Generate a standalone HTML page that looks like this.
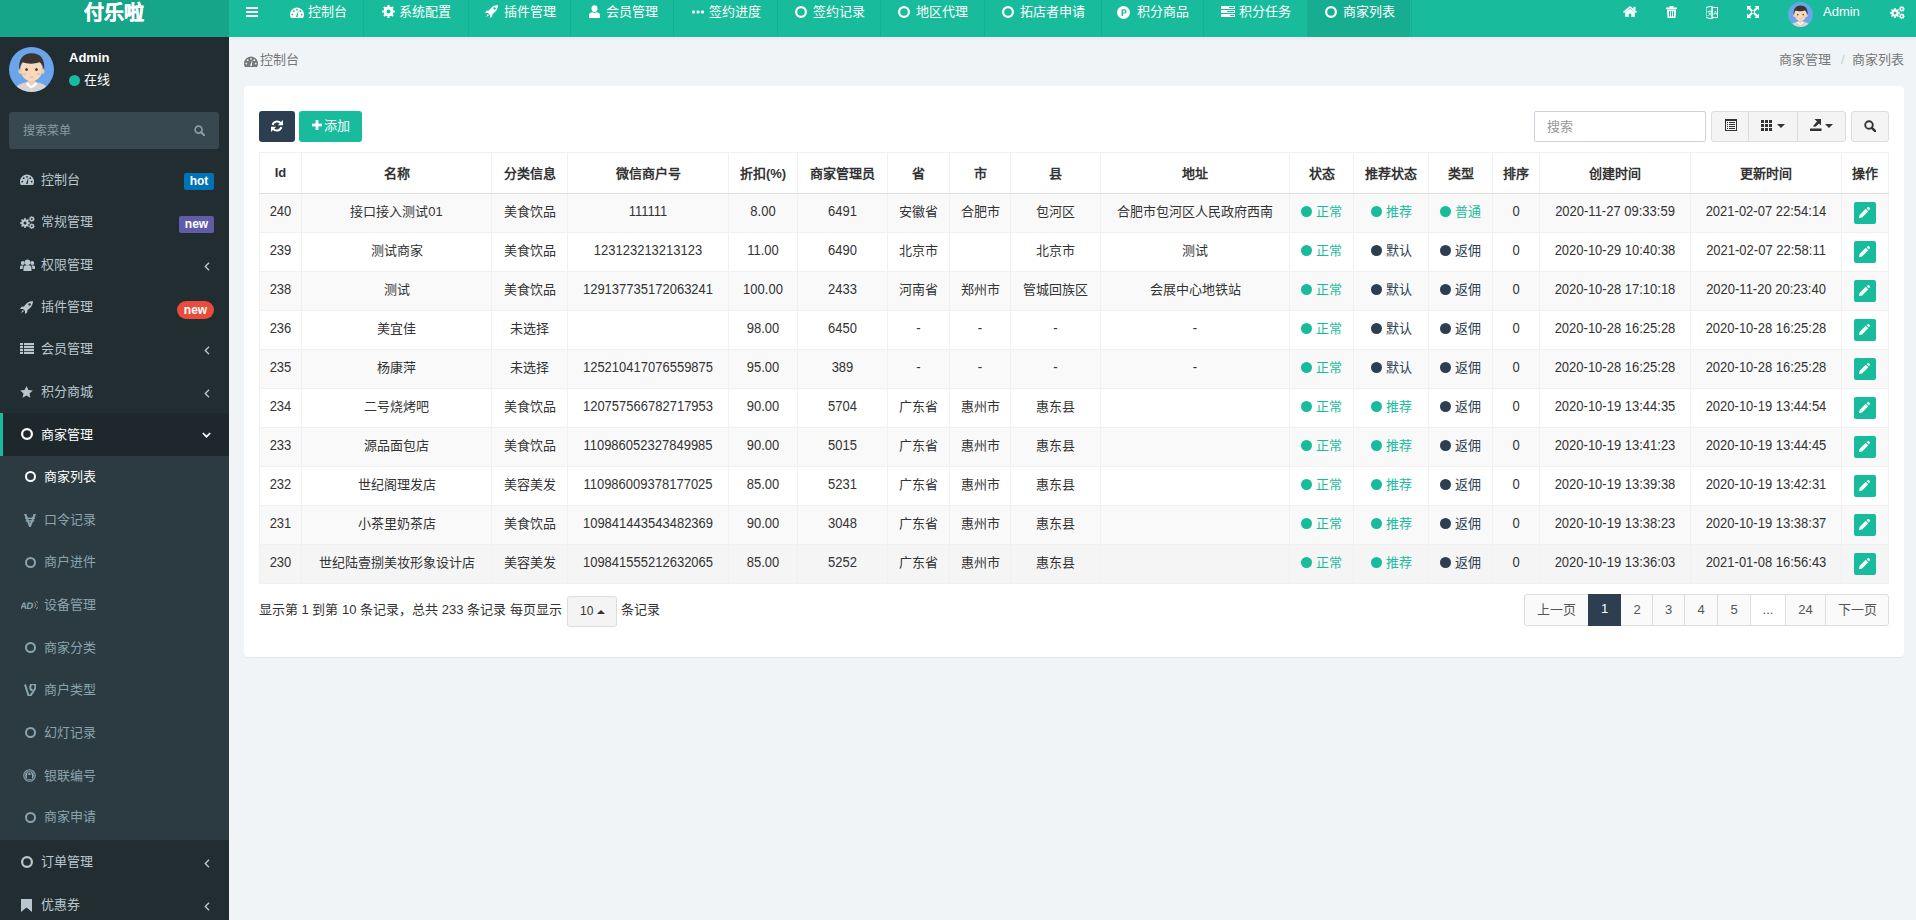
<!DOCTYPE html><html lang="zh-CN"><head><meta charset="utf-8"><style>*{box-sizing:border-box;margin:0;padding:0}
html,body{width:1916px;height:920px;overflow:hidden}
body{font-family:"Liberation Sans",sans-serif;font-size:13px;color:#333;background:#f1f4f6;position:relative}
.abs{position:absolute}
#logo{left:0;top:0;width:229px;height:37px;background:#17a58a;color:#fff;font-weight:900;font-size:20px}
#logo span{position:absolute;left:84px;top:1px;line-height:24px;-webkit-text-stroke:0.35px #fff}
#nav{left:229px;top:0;width:1687px;height:37px;background:#18bc9c}
.sep{top:0;width:1px;height:37px;background:#17b092}
.ntx{top:4px;color:#fff;line-height:16px;white-space:nowrap}
#side{left:0;top:37px;width:229px;height:883px;background:#222d32}
.mtx{color:#b8c7ce;line-height:16px;white-space:nowrap}
.badge{color:#fff;font-weight:bold;font-size:12px;text-align:center;line-height:17px}
#panel{left:244px;top:86px;width:1660px;height:571px;background:#fff;border-radius:4px;box-shadow:0 1px 1px rgba(0,0,0,.06)}
.btn{border-radius:3px}
.gbtn{background:#f4f4f4;border:1px solid #ddd}
table{border-collapse:collapse;table-layout:fixed}
td,th{border:1px solid #f1f1f1;text-align:center;white-space:nowrap;overflow:hidden;padding:0;font-size:13px}
th{height:41px;font-weight:bold;border-bottom:1px solid #dedede;color:#333;padding-bottom:2px}
td{height:39px;color:#333;padding-bottom:6px}
tr.s td{background:#f9f9f9}
tr.h td{background:#f5f5f5}
.g{color:#18bc9c}
.d{color:#2c3e50}
.dot{display:inline-block;width:11px;height:11px;border-radius:50%;vertical-align:-1px;margin-right:4px}
.g .dot{background:#18bc9c}.d .dot{background:#2c3e50}
.eb{display:inline-block;width:22px;height:22px;background:#18bc9c;border-radius:2px;vertical-align:middle;position:relative}
.pg{text-align:center;line-height:30px;font-size:13px}
.n{display:inline-block;transform:translateY(1px) scaleY(1.12);transform-origin:50% 60%}
</style></head><body>
<div id="logo" class="abs"><span>付乐啦</span></div>
<div id="nav" class="abs"></div>
<div class="abs" style="left:246px;top:7px"><svg width="12" height="10" viewBox="0 0 12 10" style="display:block" ><rect x="0" y="0" width="12" height="2" fill="#fff"/><rect x="0" y="4" width="12" height="2" fill="#fff"/><rect x="0" y="8" width="12" height="2" fill="#fff"/></svg></div>

<div class="abs" style="left:290px;top:7px"><svg width="14" height="11" viewBox="0 0 14 11" style="display:block" ><path d="M0.94 11 A7 7 0 1 1 13.06 11 Z" fill="#fff"/><circle cx="2.3" cy="7.6" r="0.9" fill="#18bc9c"/><circle cx="3.7" cy="4.2" r="0.9" fill="#18bc9c"/><circle cx="7" cy="2.8" r="0.9" fill="#18bc9c"/><circle cx="10.3" cy="4.2" r="0.9" fill="#18bc9c"/><circle cx="11.7" cy="7.6" r="0.9" fill="#18bc9c"/><path d="M8.4 3.6 L7.9 9.6 A1 1 0 0 1 6.1 9.4 Z" fill="#18bc9c"/></svg></div>
<div class="abs ntx" style="left:308px">控制台</div>
<div class="abs sep" style="left:363px"></div>
<div class="abs" style="left:382px;top:5px"><svg width="13" height="13" viewBox="0 0 13 13" style="display:block" ><path d="M10.99 5.50 L12.92 5.46 L12.92 7.54 L10.99 7.50 L10.38 8.96 L11.77 10.31 L10.31 11.77 L8.96 10.38 L7.50 10.99 L7.54 12.92 L5.46 12.92 L5.50 10.99 L4.04 10.38 L2.69 11.77 L1.23 10.31 L2.62 8.96 L2.01 7.50 L0.08 7.54 L0.08 5.46 L2.01 5.50 L2.62 4.04 L1.23 2.69 L2.69 1.23 L4.04 2.62 L5.50 2.01 L5.46 0.08 L7.54 0.08 L7.50 2.01 L8.96 2.62 L10.31 1.23 L11.77 2.69 L10.38 4.04Z" fill="#fff"/><circle cx="6.5" cy="6.5" r="4.9" fill="#fff"/><circle cx="6.5" cy="6.5" r="2" fill="#18bc9c"/></svg></div>
<div class="abs ntx" style="left:399px">系统配置</div>
<div class="abs sep" style="left:468px"></div>
<div class="abs" style="left:485px;top:5px"><svg width="13" height="13" viewBox="0 0 13 13" style="display:block" ><path d="M13 0 C8.5 0.2 6 2.5 4 5.5 L1.5 5.8 L0 8 L3 8 L5 10 L5 13 L7.2 11.5 L7.5 9 C10.5 7 12.8 4.5 13 0 Z" fill="#fff"/><circle cx="9.6" cy="3.4" r="1.2" fill="#18bc9c"/><path d="M2.8 9 L1 12 L4 10.2 Z" fill="#fff"/></svg></div>
<div class="abs ntx" style="left:504px">插件管理</div>
<div class="abs sep" style="left:570px"></div>
<div class="abs" style="left:589px;top:5px"><svg width="11" height="13" viewBox="0 0 11 13" style="display:block" ><ellipse cx="5.5" cy="3.6" rx="3" ry="3.4" fill="#fff"/><path d="M0 13 L0 10.5 C0 8.3 1.6 7.3 3.2 7.2 C4 7.8 7 7.8 7.8 7.2 C9.4 7.3 11 8.3 11 10.5 L11 13 Z" fill="#fff"/></svg></div>
<div class="abs ntx" style="left:606px">会员管理</div>
<div class="abs sep" style="left:673px"></div>
<div class="abs" style="left:692px;top:10px"><svg width="12" height="4" viewBox="0 0 12 4" style="display:block" ><rect x="0" y="0.5" width="3" height="3" rx="1" fill="#fff"/><rect x="4.5" y="0.5" width="3" height="3" rx="1" fill="#fff"/><rect x="9" y="0.5" width="3" height="3" rx="1" fill="#fff"/></svg></div>
<div class="abs ntx" style="left:709px">签约进度</div>
<div class="abs sep" style="left:777px"></div>
<div class="abs" style="left:795px;top:6px"><svg width="12" height="12" viewBox="0 0 12 12" style="display:block" ><circle cx="6.0" cy="6.0" r="4.9" fill="none" stroke="#fff" stroke-width="2.2"/></svg></div>
<div class="abs ntx" style="left:813px">签约记录</div>
<div class="abs sep" style="left:880px"></div>
<div class="abs" style="left:898px;top:6px"><svg width="12" height="12" viewBox="0 0 12 12" style="display:block" ><circle cx="6.0" cy="6.0" r="4.9" fill="none" stroke="#fff" stroke-width="2.2"/></svg></div>
<div class="abs ntx" style="left:916px">地区代理</div>
<div class="abs sep" style="left:984px"></div>
<div class="abs" style="left:1002px;top:6px"><svg width="12" height="12" viewBox="0 0 12 12" style="display:block" ><circle cx="6.0" cy="6.0" r="4.9" fill="none" stroke="#fff" stroke-width="2.2"/></svg></div>
<div class="abs ntx" style="left:1020px">拓店者申请</div>
<div class="abs sep" style="left:1101px"></div>
<div class="abs" style="left:1117px;top:6px"><svg width="13" height="13" viewBox="0 0 13 13" style="display:block" ><circle cx="6.5" cy="6.5" r="6.5" fill="#fff"/><path d="M4.6 3.2 H7.4 A2.2 2.2 0 0 1 7.4 7.6 H6 V10 H4.6 Z M6 4.4 V6.4 H7.3 A1 1 0 0 0 7.3 4.4 Z" fill="#18bc9c" fill-rule="evenodd"/></svg></div>
<div class="abs ntx" style="left:1137px">积分商品</div>
<div class="abs sep" style="left:1203px"></div>
<div class="abs" style="left:1221px;top:6px"><svg width="14" height="11" viewBox="0 0 14 11" style="display:block" ><rect x="0" y="0" width="14" height="3" fill="#fff"/><rect x="0" y="4" width="14" height="3" fill="#fff"/><rect x="0" y="8" width="14" height="3" fill="#fff"/><rect x="8" y="1" width="5" height="1" fill="#18bc9c"/><rect x="6" y="5" width="7" height="1" fill="#18bc9c"/><rect x="9" y="9" width="4" height="1" fill="#18bc9c"/></svg></div>
<div class="abs ntx" style="left:1239px">积分任务</div>
<div class="abs" style="left:1307px;top:0;width:103px;height:37px;background:#17ad91"></div>
<div class="abs sep" style="left:1307px"></div>
<div class="abs" style="left:1325px;top:6px"><svg width="12" height="12" viewBox="0 0 12 12" style="display:block" ><circle cx="6.0" cy="6.0" r="4.9" fill="none" stroke="#fff" stroke-width="2.2"/></svg></div>
<div class="abs ntx" style="left:1343px">商家列表</div>
<div class="abs sep" style="left:1411px"></div>
<div class="abs" style="left:1623px;top:6px"><svg width="14" height="11" viewBox="0 0 14 11" style="display:block" ><path d="M7 0 L14 5.8 L13 7 L7 2 L1 7 L0 5.8 Z" fill="#fff"/><rect x="10.5" y="0.8" width="2" height="3" fill="#fff"/><path d="M2.2 6.3 L7 2.6 L11.8 6.3 V11 H8.3 V7.8 H5.7 V11 H2.2 Z" fill="#fff"/></svg></div>
<div class="abs" style="left:1666px;top:6px"><svg width="11" height="12" viewBox="0 0 11 12" style="display:block" ><rect x="0" y="1.5" width="11" height="1.6" fill="#fff"/><rect x="3.5" y="0" width="4" height="2" rx="0.5" fill="#fff"/><path d="M1 3.5 H10 L9.5 12 H1.5 Z" fill="#fff"/><rect x="3" y="5" width="1" height="5.5" fill="#18bc9c"/><rect x="5" y="5" width="1" height="5.5" fill="#18bc9c"/><rect x="7" y="5" width="1" height="5.5" fill="#18bc9c"/></svg></div>
<div class="abs" style="left:1706px;top:6px"><svg width="12" height="13" viewBox="0 0 12 13" style="display:block" ><path d="M0 1.5 L6.2 0 V13 L0 11.5 Z" fill="none" stroke="#fff" stroke-width="1"/><rect x="6" y="1.5" width="5.5" height="10" fill="none" stroke="#fff" stroke-width="1"/><text x="1.2" y="8.5" font-size="5.5" fill="#fff" font-family="Liberation Sans">文</text><text x="7.2" y="9" font-size="6" fill="#fff" font-family="Liberation Sans">A</text></svg></div>
<div class="abs" style="left:1747px;top:6px"><svg width="12" height="12" viewBox="0 0 12 12" style="display:block" ><path d="M0 0 H4.5 L3 1.5 L6 4.5 L4.5 6 L1.5 3 L0 4.5 Z" fill="#fff"/><path d="M12 0 V4.5 L10.5 3 L7.5 6 L6 4.5 L9 1.5 L7.5 0 Z" fill="#fff"/><path d="M0 12 V7.5 L1.5 9 L4.5 6 L6 7.5 L3 10.5 L4.5 12 Z" fill="#fff"/><path d="M12 12 H7.5 L9 10.5 L6 7.5 L7.5 6 L10.5 9 L12 7.5 Z" fill="#fff"/></svg></div>
<div class="abs" style="left:1788px;top:2px"><svg width="25" height="25" viewBox="0 0 100 100" style="display:block" ><defs><clipPath id="cp25"><circle cx="50" cy="50" r="50"/></clipPath></defs><g clip-path="url(#cp25)"><rect width="100" height="100" fill="#6aa5ec"/><path d="M10 100 C14 84 30 78 50 78 C70 78 86 84 90 100 Z" fill="#d9d4d0"/><path d="M40 76 L50 88 L60 76 L62 84 L50 92 L38 84 Z" fill="#fff"/><rect x="42" y="64" width="16" height="16" fill="#f3c9a8"/><ellipse cx="50" cy="50" rx="24" ry="26" fill="#f8d9bd"/><ellipse cx="25" cy="54" rx="4" ry="6" fill="#f3c9a8"/><ellipse cx="75" cy="54" rx="4" ry="6" fill="#f3c9a8"/><path d="M23 52 C20 30 30 14 50 14 C72 14 80 28 78 52 C76 42 72 36 68 34 C58 38 40 38 30 34 C26 38 24 44 23 52 Z" fill="#3a3432"/><ellipse cx="39" cy="50" rx="3" ry="3.5" fill="#5a3d2c"/><ellipse cx="61" cy="50" rx="3" ry="3.5" fill="#5a3d2c"/><ellipse cx="34" cy="60" rx="5" ry="3" fill="#f5b5a5" opacity="0.7"/><ellipse cx="66" cy="60" rx="5" ry="3" fill="#f5b5a5" opacity="0.7"/><path d="M46 66 Q50 69 54 66" fill="none" stroke="#e08a7a" stroke-width="1.5"/></g></svg></div>
<div class="abs ntx" style="left:1823px">Admin</div>
<div class="abs" style="left:1890px;top:6px"><svg width="15" height="13" viewBox="0 0 15 13" style="display:block" ><path d="M8.51 6.20 L9.94 6.25 L9.94 7.75 L8.51 7.80 L8.05 8.91 L9.02 9.97 L7.97 11.02 L6.91 10.05 L5.80 10.51 L5.75 11.94 L4.25 11.94 L4.20 10.51 L3.09 10.05 L2.03 11.02 L0.98 9.97 L1.95 8.91 L1.49 7.80 L0.06 7.75 L0.06 6.25 L1.49 6.20 L1.95 5.09 L0.98 4.03 L2.03 2.98 L3.09 3.95 L4.20 3.49 L4.25 2.06 L5.75 2.06 L5.80 3.49 L6.91 3.95 L7.97 2.98 L9.02 4.03 L8.05 5.09Z" fill="#fff"/><circle cx="5" cy="7" r="3.42" fill="#fff"/><circle cx="5" cy="7" r="1.5" fill="#18bc9c"/><path d="M13.85 2.53 L14.77 2.55 L14.77 3.45 L13.85 3.47 L13.58 4.12 L14.21 4.78 L13.58 5.41 L12.92 4.78 L12.27 5.05 L12.25 5.97 L11.35 5.97 L11.33 5.05 L10.68 4.78 L10.02 5.41 L9.39 4.78 L10.02 4.12 L9.75 3.47 L8.83 3.45 L8.83 2.55 L9.75 2.53 L10.02 1.88 L9.39 1.22 L10.02 0.59 L10.68 1.22 L11.33 0.95 L11.35 0.03 L12.25 0.03 L12.27 0.95 L12.92 1.22 L13.58 0.59 L14.21 1.22 L13.58 1.88Z" fill="#fff"/><circle cx="11.8" cy="3" r="1.9949999999999999" fill="#fff"/><circle cx="11.8" cy="3" r="0.9" fill="#18bc9c"/><path d="M13.85 9.73 L14.77 9.75 L14.77 10.65 L13.85 10.67 L13.58 11.32 L14.21 11.98 L13.58 12.61 L12.92 11.98 L12.27 12.25 L12.25 13.17 L11.35 13.17 L11.33 12.25 L10.68 11.98 L10.02 12.61 L9.39 11.98 L10.02 11.32 L9.75 10.67 L8.83 10.65 L8.83 9.75 L9.75 9.73 L10.02 9.08 L9.39 8.42 L10.02 7.79 L10.68 8.42 L11.33 8.15 L11.35 7.23 L12.25 7.23 L12.27 8.15 L12.92 8.42 L13.58 7.79 L14.21 8.42 L13.58 9.08Z" fill="#fff"/><circle cx="11.8" cy="10.2" r="1.9949999999999999" fill="#fff"/><circle cx="11.8" cy="10.2" r="0.9" fill="#18bc9c"/></svg></div>
<div id="side" class="abs"></div>
<div class="abs" style="left:9px;top:47px"><svg width="45" height="45" viewBox="0 0 100 100" style="display:block" ><defs><clipPath id="cp45"><circle cx="50" cy="50" r="50"/></clipPath></defs><g clip-path="url(#cp45)"><rect width="100" height="100" fill="#6aa5ec"/><path d="M10 100 C14 84 30 78 50 78 C70 78 86 84 90 100 Z" fill="#d9d4d0"/><path d="M40 76 L50 88 L60 76 L62 84 L50 92 L38 84 Z" fill="#fff"/><rect x="42" y="64" width="16" height="16" fill="#f3c9a8"/><ellipse cx="50" cy="50" rx="24" ry="26" fill="#f8d9bd"/><ellipse cx="25" cy="54" rx="4" ry="6" fill="#f3c9a8"/><ellipse cx="75" cy="54" rx="4" ry="6" fill="#f3c9a8"/><path d="M23 52 C20 30 30 14 50 14 C72 14 80 28 78 52 C76 42 72 36 68 34 C58 38 40 38 30 34 C26 38 24 44 23 52 Z" fill="#3a3432"/><ellipse cx="39" cy="50" rx="3" ry="3.5" fill="#5a3d2c"/><ellipse cx="61" cy="50" rx="3" ry="3.5" fill="#5a3d2c"/><ellipse cx="34" cy="60" rx="5" ry="3" fill="#f5b5a5" opacity="0.7"/><ellipse cx="66" cy="60" rx="5" ry="3" fill="#f5b5a5" opacity="0.7"/><path d="M46 66 Q50 69 54 66" fill="none" stroke="#e08a7a" stroke-width="1.5"/></g></svg></div>
<div class="abs" style="left:69px;top:50px;color:#fff;font-weight:bold;font-size:13px;line-height:16px">Admin</div>
<div class="abs" style="left:69px;top:75px;width:11px;height:11px;border-radius:50%;background:#18bc9c"></div>
<div class="abs" style="left:84px;top:72px;color:#fff;font-size:13px;line-height:16px">在线</div>
<div class="abs" style="left:9px;top:112px;width:210px;height:37px;background:#374850;border-radius:3px"></div>
<div class="abs" style="left:23px;top:123px;color:#8a9aa2;line-height:16px;font-size:12px">搜索菜单</div>
<div class="abs" style="left:194px;top:125px"><svg width="11" height="11" viewBox="0 0 12 12" style="display:block" ><circle cx="5" cy="5" r="3.8" fill="none" stroke="#8a9aa2" stroke-width="1.9"/><path d="M7.8 7.8 L11.2 11.2" stroke="#8a9aa2" stroke-width="2.4" stroke-linecap="round"/></svg></div>
<div class="abs mtx" style="left:41px;top:171.6px">控制台</div>
<div class="abs" style="left:20px;top:173.6px"><svg width="14" height="11" viewBox="0 0 14 11" style="display:block" ><path d="M0.94 11 A7 7 0 1 1 13.06 11 Z" fill="#b8c7ce"/><circle cx="2.3" cy="7.6" r="0.9" fill="#222d32"/><circle cx="3.7" cy="4.2" r="0.9" fill="#222d32"/><circle cx="7" cy="2.8" r="0.9" fill="#222d32"/><circle cx="10.3" cy="4.2" r="0.9" fill="#222d32"/><circle cx="11.7" cy="7.6" r="0.9" fill="#222d32"/><path d="M8.4 3.6 L7.9 9.6 A1 1 0 0 1 6.1 9.4 Z" fill="#222d32"/></svg></div>
<div class="abs badge" style="left:184px;top:173px;width:30px;height:17px;background:#0073b7;border-radius:2px">hot</div>
<div class="abs mtx" style="left:41px;top:214.4px">常规管理</div>
<div class="abs" style="left:20px;top:216.4px"><svg width="15" height="13" viewBox="0 0 15 13" style="display:block" ><path d="M8.51 6.20 L9.94 6.25 L9.94 7.75 L8.51 7.80 L8.05 8.91 L9.02 9.97 L7.97 11.02 L6.91 10.05 L5.80 10.51 L5.75 11.94 L4.25 11.94 L4.20 10.51 L3.09 10.05 L2.03 11.02 L0.98 9.97 L1.95 8.91 L1.49 7.80 L0.06 7.75 L0.06 6.25 L1.49 6.20 L1.95 5.09 L0.98 4.03 L2.03 2.98 L3.09 3.95 L4.20 3.49 L4.25 2.06 L5.75 2.06 L5.80 3.49 L6.91 3.95 L7.97 2.98 L9.02 4.03 L8.05 5.09Z" fill="#b8c7ce"/><circle cx="5" cy="7" r="3.42" fill="#b8c7ce"/><circle cx="5" cy="7" r="1.5" fill="#222d32"/><path d="M13.85 2.53 L14.77 2.55 L14.77 3.45 L13.85 3.47 L13.58 4.12 L14.21 4.78 L13.58 5.41 L12.92 4.78 L12.27 5.05 L12.25 5.97 L11.35 5.97 L11.33 5.05 L10.68 4.78 L10.02 5.41 L9.39 4.78 L10.02 4.12 L9.75 3.47 L8.83 3.45 L8.83 2.55 L9.75 2.53 L10.02 1.88 L9.39 1.22 L10.02 0.59 L10.68 1.22 L11.33 0.95 L11.35 0.03 L12.25 0.03 L12.27 0.95 L12.92 1.22 L13.58 0.59 L14.21 1.22 L13.58 1.88Z" fill="#b8c7ce"/><circle cx="11.8" cy="3" r="1.9949999999999999" fill="#b8c7ce"/><circle cx="11.8" cy="3" r="0.9" fill="#222d32"/><path d="M13.85 9.73 L14.77 9.75 L14.77 10.65 L13.85 10.67 L13.58 11.32 L14.21 11.98 L13.58 12.61 L12.92 11.98 L12.27 12.25 L12.25 13.17 L11.35 13.17 L11.33 12.25 L10.68 11.98 L10.02 12.61 L9.39 11.98 L10.02 11.32 L9.75 10.67 L8.83 10.65 L8.83 9.75 L9.75 9.73 L10.02 9.08 L9.39 8.42 L10.02 7.79 L10.68 8.42 L11.33 8.15 L11.35 7.23 L12.25 7.23 L12.27 8.15 L12.92 8.42 L13.58 7.79 L14.21 8.42 L13.58 9.08Z" fill="#b8c7ce"/><circle cx="11.8" cy="10.2" r="1.9949999999999999" fill="#b8c7ce"/><circle cx="11.8" cy="10.2" r="0.9" fill="#222d32"/></svg></div>
<div class="abs badge" style="left:179px;top:216px;width:35px;height:17px;background:#605ca8;border-radius:2px">new</div>
<div class="abs mtx" style="left:41px;top:256.5px">权限管理</div>
<div class="abs" style="left:20px;top:258.5px"><svg width="15" height="12" viewBox="0 0 15 12" style="display:block" ><circle cx="7.5" cy="3.2" r="2.8" fill="#b8c7ce"/><path d="M3.5 12 V9 C3.5 7 5 6.3 6 6.3 H9 C10 6.3 11.5 7 11.5 9 V12 Z" fill="#b8c7ce"/><circle cx="2.8" cy="4" r="2" fill="#b8c7ce"/><circle cx="12.2" cy="4" r="2" fill="#b8c7ce"/><path d="M0 10 V8.3 C0 7 0.8 6.6 1.8 6.6 H3.6 C2.8 7.4 2.6 8.4 2.6 10 Z" fill="#b8c7ce"/><path d="M15 10 V8.3 C15 7 14.2 6.6 13.2 6.6 H11.4 C12.2 7.4 12.4 8.4 12.4 10 Z" fill="#b8c7ce"/></svg></div>
<div class="abs" style="left:204px;top:261.5px"><svg width="6" height="9" viewBox="0 0 6 9" style="display:block" ><path d="M5 0.8 L1.3 4.5 L5 8.2" fill="none" stroke="#b8c7ce" stroke-width="1.4"/></svg></div>
<div class="abs mtx" style="left:41px;top:299.3px">插件管理</div>
<div class="abs" style="left:20px;top:301.3px"><svg width="13" height="13" viewBox="0 0 13 13" style="display:block" ><path d="M13 0 C8.5 0.2 6 2.5 4 5.5 L1.5 5.8 L0 8 L3 8 L5 10 L5 13 L7.2 11.5 L7.5 9 C10.5 7 12.8 4.5 13 0 Z" fill="#b8c7ce"/><circle cx="9.6" cy="3.4" r="1.2" fill="#222d32"/><path d="M2.8 9 L1 12 L4 10.2 Z" fill="#b8c7ce"/></svg></div>
<div class="abs badge" style="left:177px;top:301px;width:37px;height:18px;background:#e74c3c;border-radius:9px;line-height:18px">new</div>
<div class="abs mtx" style="left:41px;top:341.4px">会员管理</div>
<div class="abs" style="left:20px;top:343.4px"><svg width="14" height="11" viewBox="0 0 14 11" style="display:block" ><rect x="0" y="0" width="3" height="2.2" fill="#b8c7ce"/><rect x="4" y="0" width="10" height="2.2" fill="#b8c7ce"/><rect x="0" y="3" width="3" height="2.2" fill="#b8c7ce"/><rect x="4" y="3" width="10" height="2.2" fill="#b8c7ce"/><rect x="0" y="6" width="3" height="2.2" fill="#b8c7ce"/><rect x="4" y="6" width="10" height="2.2" fill="#b8c7ce"/><rect x="0" y="9" width="3" height="2.2" fill="#b8c7ce"/><rect x="4" y="9" width="10" height="2.2" fill="#b8c7ce"/></svg></div>
<div class="abs" style="left:204px;top:346.4px"><svg width="6" height="9" viewBox="0 0 6 9" style="display:block" ><path d="M5 0.8 L1.3 4.5 L5 8.2" fill="none" stroke="#b8c7ce" stroke-width="1.4"/></svg></div>
<div class="abs mtx" style="left:41px;top:383.8px">积分商城</div>
<div class="abs" style="left:20px;top:385.8px"><svg width="13" height="12" viewBox="0 0 13 12" style="display:block" ><path d="M6.5 0 L8.4 4 L12.8 4.5 L9.5 7.4 L10.4 11.8 L6.5 9.6 L2.6 11.8 L3.5 7.4 L0.2 4.5 L4.6 4 Z" fill="#b8c7ce"/></svg></div>
<div class="abs" style="left:204px;top:388.8px"><svg width="6" height="9" viewBox="0 0 6 9" style="display:block" ><path d="M5 0.8 L1.3 4.5 L5 8.2" fill="none" stroke="#b8c7ce" stroke-width="1.4"/></svg></div>
<div class="abs" style="left:0;top:413px;width:229px;height:43px;background:#1e282c"></div>
<div class="abs" style="left:0;top:413px;width:3px;height:43px;background:#18bc9c"></div>
<div class="abs" style="left:21px;top:428px"><svg width="12" height="12" viewBox="0 0 12 12" style="display:block" ><circle cx="6.0" cy="6.0" r="4.9" fill="none" stroke="#fff" stroke-width="2.2"/></svg></div>
<div class="abs mtx" style="left:41px;top:426.6px;color:#fff">商家管理</div>
<div class="abs" style="left:202px;top:432px"><svg width="9" height="6" viewBox="0 0 9 6" style="display:block" ><path d="M0.8 1 L4.5 4.7 L8.2 1" fill="none" stroke="#fff" stroke-width="1.7"/></svg></div>
<div class="abs" style="left:0;top:456px;width:229px;height:384px;background:#2c3b41"></div>
<div class="abs" style="left:25px;top:471.1px"><svg width="11" height="11" viewBox="0 0 11 11" style="display:block" ><circle cx="5.5" cy="5.5" r="4.5" fill="none" stroke="#fff" stroke-width="2"/></svg></div>
<div class="abs mtx" style="left:44px;top:468.6px;color:#fff">商家列表</div>
<div class="abs" style="left:24px;top:513.5px"><svg width="12" height="13" viewBox="0 0 12 13" style="display:block" ><path d="M0 0 H2.4 L6 9.5 L9.6 0 H12 L6.8 13 H5.2 Z" fill="#8aa4af"/><rect x="1" y="3.6" width="10" height="1.4" fill="#8aa4af"/><rect x="1.8" y="6.2" width="8.4" height="1.4" fill="#8aa4af"/></svg></div>
<div class="abs mtx" style="left:44px;top:512.0px;color:#8aa4af">口令记录</div>
<div class="abs" style="left:25px;top:556.9px"><svg width="11" height="11" viewBox="0 0 11 11" style="display:block" ><circle cx="5.5" cy="5.5" r="4.5" fill="none" stroke="#8aa4af" stroke-width="2"/></svg></div>
<div class="abs mtx" style="left:44px;top:554.4px;color:#8aa4af">商户进件</div>
<div class="abs" style="left:21px;top:599.9px"><svg width="17" height="10" viewBox="0 0 17 10" style="display:block" ><text x="0" y="9" font-size="9.5" font-weight="bold" fill="#8aa4af" font-family="Liberation Sans" letter-spacing="-0.6" transform="skewX(-8)">AD</text><path d="M13 2.5 A2.6 2.6 0 0 1 13 7.5 M15 1.2 A4 4 0 0 1 15 8.8" fill="none" stroke="#8aa4af" stroke-width="1" opacity="0.8"/></svg></div>
<div class="abs mtx" style="left:44px;top:596.9px;color:#8aa4af">设备管理</div>
<div class="abs" style="left:25px;top:642.3px"><svg width="11" height="11" viewBox="0 0 11 11" style="display:block" ><circle cx="5.5" cy="5.5" r="4.5" fill="none" stroke="#8aa4af" stroke-width="2"/></svg></div>
<div class="abs mtx" style="left:44px;top:639.8px;color:#8aa4af">商家分类</div>
<div class="abs" style="left:24px;top:684.2px"><svg width="12" height="12" viewBox="0 0 12 12" style="display:block" ><path d="M1 0.5 L4.5 11.5 L6.5 11.5 C9 8 11.5 5 11.5 2.8 C11.5 0.8 10.2 0 9 0 C7.2 0 6.2 1.5 6.2 3.4 C6.2 5 7.2 6 8.6 6.1" fill="none" stroke="#8aa4af" stroke-width="2"/></svg></div>
<div class="abs mtx" style="left:44px;top:682.2px;color:#8aa4af">商户类型</div>
<div class="abs" style="left:25px;top:727.1px"><svg width="11" height="11" viewBox="0 0 11 11" style="display:block" ><circle cx="5.5" cy="5.5" r="4.5" fill="none" stroke="#8aa4af" stroke-width="2"/></svg></div>
<div class="abs mtx" style="left:44px;top:724.6px;color:#8aa4af">幻灯记录</div>
<div class="abs" style="left:23px;top:769.1px"><svg width="13" height="13" viewBox="0 0 13 13" style="display:block" ><circle cx="6.5" cy="6.5" r="6.3" fill="#8aa4af"/><circle cx="6.5" cy="6.5" r="4.8" fill="none" stroke="#2c3b41" stroke-width="0.8"/><rect x="4" y="6" width="5" height="4" fill="#2c3b41"/><path d="M4.8 6 V4.8 A1.7 1.7 0 0 1 8.2 4.8 V6" fill="none" stroke="#2c3b41" stroke-width="1"/></svg></div>
<div class="abs mtx" style="left:44px;top:767.6px;color:#8aa4af">银联编号</div>
<div class="abs" style="left:25px;top:811.5px"><svg width="11" height="11" viewBox="0 0 11 11" style="display:block" ><circle cx="5.5" cy="5.5" r="4.5" fill="none" stroke="#8aa4af" stroke-width="2"/></svg></div>
<div class="abs mtx" style="left:44px;top:809.0px;color:#8aa4af">商家申请</div>
<div class="abs" style="left:21px;top:855.9px"><svg width="12" height="12" viewBox="0 0 12 12" style="display:block" ><circle cx="6.0" cy="6.0" r="4.9" fill="none" stroke="#b8c7ce" stroke-width="2.2"/></svg></div>
<div class="abs mtx" style="left:41px;top:853.9px">订单管理</div>
<div class="abs" style="left:204px;top:858.9px"><svg width="6" height="9" viewBox="0 0 6 9" style="display:block" ><path d="M5 0.8 L1.3 4.5 L5 8.2" fill="none" stroke="#b8c7ce" stroke-width="1.4"/></svg></div>
<div class="abs" style="left:21px;top:898.5px"><svg width="11" height="13" viewBox="0 0 11 13" style="display:block" ><path d="M0 0 H11 V13 L5.5 8.5 L0 13 Z" fill="#b8c7ce"/></svg></div>
<div class="abs mtx" style="left:41px;top:896.9px">优惠券</div>
<div class="abs" style="left:204px;top:901.9px"><svg width="6" height="9" viewBox="0 0 6 9" style="display:block" ><path d="M5 0.8 L1.3 4.5 L5 8.2" fill="none" stroke="#b8c7ce" stroke-width="1.4"/></svg></div>
<div class="abs" style="left:244px;top:55.5px"><svg width="14" height="11" viewBox="0 0 14 11" style="display:block" ><path d="M0.94 11 A7 7 0 1 1 13.06 11 Z" fill="#777"/><circle cx="2.3" cy="7.6" r="0.9" fill="#f1f4f6"/><circle cx="3.7" cy="4.2" r="0.9" fill="#f1f4f6"/><circle cx="7" cy="2.8" r="0.9" fill="#f1f4f6"/><circle cx="10.3" cy="4.2" r="0.9" fill="#f1f4f6"/><circle cx="11.7" cy="7.6" r="0.9" fill="#f1f4f6"/><path d="M8.4 3.6 L7.9 9.6 A1 1 0 0 1 6.1 9.4 Z" fill="#f1f4f6"/></svg></div>
<div class="abs" style="left:260px;top:52px;color:#777;line-height:16px">控制台</div>
<div class="abs" style="left:1779px;top:52px;color:#777;line-height:16px">商家管理<span style="color:#ccc;padding:0 7px 0 10px">/</span>商家列表</div>
<div class="abs" style="left:229px;top:37px;width:1687px;height:4px;background:linear-gradient(rgba(0,0,0,.035),rgba(0,0,0,0))"></div>
<div id="panel" class="abs"></div>
<div class="abs btn" style="left:259px;top:111px;width:36px;height:31px;background:#2c3e50"><div class="abs" style="left:12px;top:8.5px"><svg width="12" height="12" viewBox="0 0 12 12" style="display:block" ><path d="M10.3 3.8 A4.8 4.8 0 0 0 1.6 4.9" fill="none" stroke="#fff" stroke-width="2"/><path d="M12 0 V5.2 H6.8 Z" fill="#fff"/><path d="M1.7 8.2 A4.8 4.8 0 0 0 10.4 7.1" fill="none" stroke="#fff" stroke-width="2"/><path d="M0 12 V6.8 H5.2 Z" fill="#fff"/></svg></div></div>
<div class="abs btn" style="left:299px;top:111px;width:63px;height:31px;background:#18bc9c"><div class="abs" style="left:13px;top:9px"><svg width="10" height="10" viewBox="0 0 10 10" style="display:block" ><rect x="3.6" y="0" width="2.8" height="10" fill="#fff"/><rect x="0" y="3.6" width="10" height="2.8" fill="#fff"/></svg></div><div class="abs" style="left:25px;top:7px;color:#fff;line-height:16px">添加</div></div>
<div class="abs" style="left:1534px;top:111px;width:172px;height:31px;border:1px solid #ccd3de;border-radius:2px;background:#fff"><div class="abs" style="left:12px;top:7px;color:#999;line-height:16px">搜索</div></div>
<div class="abs gbtn" style="left:1711px;top:111px;width:135px;height:31px;border-radius:3px"></div>
<div class="abs" style="left:1748px;top:112px;width:1px;height:29px;background:#ddd"></div>
<div class="abs" style="left:1797px;top:112px;width:1px;height:29px;background:#ddd"></div>
<div class="abs" style="left:1725px;top:119px"><svg width="12" height="12" viewBox="0 0 12 12" style="display:block" ><rect x="0" y="0" width="12" height="12" fill="#333"/><rect x="1" y="2" width="10" height="9" fill="#f4f4f4"/><rect x="2" y="3" width="1" height="1" fill="#333"/><rect x="4" y="3" width="6" height="1" fill="#333"/><rect x="2" y="5" width="1" height="1" fill="#333"/><rect x="4" y="5" width="6" height="1" fill="#333"/><rect x="2" y="7" width="1" height="1" fill="#333"/><rect x="4" y="7" width="6" height="1" fill="#333"/><rect x="2" y="9" width="1" height="1" fill="#333"/><rect x="4" y="9" width="6" height="1" fill="#333"/></svg></div>
<div class="abs" style="left:1761px;top:120px"><svg width="11" height="11" viewBox="0 0 11 11" style="display:block" ><rect x="0" y="0" width="3" height="3" fill="#333"/><rect x="0" y="4" width="3" height="3" fill="#333"/><rect x="0" y="8" width="3" height="3" fill="#333"/><rect x="4" y="0" width="3" height="3" fill="#333"/><rect x="4" y="4" width="3" height="3" fill="#333"/><rect x="4" y="8" width="3" height="3" fill="#333"/><rect x="8" y="0" width="3" height="3" fill="#333"/><rect x="8" y="4" width="3" height="3" fill="#333"/><rect x="8" y="8" width="3" height="3" fill="#333"/></svg></div><div class="abs" style="left:1777px;top:124px"><svg width="8" height="4" viewBox="0 0 8 4" style="display:block" ><path d="M0 0 H8 L4 4 Z" fill="#333"/></svg></div>
<div class="abs" style="left:1810px;top:119px"><svg width="12" height="12" viewBox="0 0 12 12" style="display:block" ><rect x="0" y="9.5" width="11.5" height="3" fill="#333"/><path d="M4.5 0 H11 V6.5 L9 4.5 L5.6 7.8 L2.8 7.2 L7 2.5 Z" fill="#333"/></svg></div><div class="abs" style="left:1825px;top:124px"><svg width="8" height="4" viewBox="0 0 8 4" style="display:block" ><path d="M0 0 H8 L4 4 Z" fill="#333"/></svg></div>
<div class="abs gbtn" style="left:1851px;top:111px;width:38px;height:31px;border-radius:3px"></div>
<div class="abs" style="left:1864px;top:120px"><svg width="12" height="12" viewBox="0 0 12 12" style="display:block" ><circle cx="5" cy="5" r="3.8" fill="none" stroke="#333" stroke-width="1.9"/><path d="M7.8 7.8 L11.2 11.2" stroke="#333" stroke-width="2.4" stroke-linecap="round"/></svg></div>
<table class="abs" style="left:259px;top:152px"><colgroup><col style="width:42px"><col style="width:190px"><col style="width:76px"><col style="width:161px"><col style="width:69px"><col style="width:90px"><col style="width:62px"><col style="width:61px"><col style="width:90px"><col style="width:189px"><col style="width:64px"><col style="width:75px"><col style="width:64px"><col style="width:47px"><col style="width:151px"><col style="width:151px"><col style="width:47px"></colgroup><thead><tr><th>Id</th><th>名称</th><th>分类信息</th><th>微信商户号</th><th>折扣(%)</th><th>商家管理员</th><th>省</th><th>市</th><th>县</th><th>地址</th><th>状态</th><th>推荐状态</th><th>类型</th><th>排序</th><th>创建时间</th><th>更新时间</th><th>操作</th></tr></thead><tbody><tr class="s"><td><span class="n">240</span></td><td>接口接入测试01</td><td>美食饮品</td><td><span class="n">111111</span></td><td><span class="n">8.00</span></td><td><span class="n">6491</span></td><td>安徽省</td><td>合肥市</td><td>包河区</td><td>合肥市包河区人民政府西南</td><td><span class="g"><span class="dot"></span>正常</span></td><td><span class="g"><span class="dot"></span>推荐</span></td><td><span class="g"><span class="dot"></span>普通</span></td><td><span class="n">0</span></td><td><span class="n">2020-11-27 09:33:59</span></td><td><span class="n">2021-02-07 22:54:14</span></td><td><span class="eb" style="top:3px"><span class="abs" style="left:5px;top:5px"><svg width="11" height="11" viewBox="0 0 11 11" style="display:block" ><path d="M0 11 L0.6 7.9 L6.7 1.8 L9.2 4.3 L3.1 10.4 Z" fill="#fff"/><path d="M7.7 1.2 L8.6 0.3 A1 1 0 0 1 10 0.3 L10.7 1 A1 1 0 0 1 10.7 2.4 L9.8 3.3 Z" fill="#fff"/></svg></span></span></td></tr><tr class=""><td><span class="n">239</span></td><td>测试商家</td><td>美食饮品</td><td><span class="n">123123213213123</span></td><td><span class="n">11.00</span></td><td><span class="n">6490</span></td><td>北京市</td><td></td><td>北京市</td><td>测试</td><td><span class="g"><span class="dot"></span>正常</span></td><td><span class="d"><span class="dot"></span>默认</span></td><td><span class="d"><span class="dot"></span>返佣</span></td><td><span class="n">0</span></td><td><span class="n">2020-10-29 10:40:38</span></td><td><span class="n">2021-02-07 22:58:11</span></td><td><span class="eb" style="top:3px"><span class="abs" style="left:5px;top:5px"><svg width="11" height="11" viewBox="0 0 11 11" style="display:block" ><path d="M0 11 L0.6 7.9 L6.7 1.8 L9.2 4.3 L3.1 10.4 Z" fill="#fff"/><path d="M7.7 1.2 L8.6 0.3 A1 1 0 0 1 10 0.3 L10.7 1 A1 1 0 0 1 10.7 2.4 L9.8 3.3 Z" fill="#fff"/></svg></span></span></td></tr><tr class="s"><td><span class="n">238</span></td><td>测试</td><td>美食饮品</td><td><span class="n">129137735172063241</span></td><td><span class="n">100.00</span></td><td><span class="n">2433</span></td><td>河南省</td><td>郑州市</td><td>管城回族区</td><td>会展中心地铁站</td><td><span class="g"><span class="dot"></span>正常</span></td><td><span class="d"><span class="dot"></span>默认</span></td><td><span class="d"><span class="dot"></span>返佣</span></td><td><span class="n">0</span></td><td><span class="n">2020-10-28 17:10:18</span></td><td><span class="n">2020-11-20 20:23:40</span></td><td><span class="eb" style="top:3px"><span class="abs" style="left:5px;top:5px"><svg width="11" height="11" viewBox="0 0 11 11" style="display:block" ><path d="M0 11 L0.6 7.9 L6.7 1.8 L9.2 4.3 L3.1 10.4 Z" fill="#fff"/><path d="M7.7 1.2 L8.6 0.3 A1 1 0 0 1 10 0.3 L10.7 1 A1 1 0 0 1 10.7 2.4 L9.8 3.3 Z" fill="#fff"/></svg></span></span></td></tr><tr class=""><td><span class="n">236</span></td><td>美宜佳</td><td>未选择</td><td></td><td><span class="n">98.00</span></td><td><span class="n">6450</span></td><td><span class="n">-</span></td><td><span class="n">-</span></td><td><span class="n">-</span></td><td><span class="n">-</span></td><td><span class="g"><span class="dot"></span>正常</span></td><td><span class="d"><span class="dot"></span>默认</span></td><td><span class="d"><span class="dot"></span>返佣</span></td><td><span class="n">0</span></td><td><span class="n">2020-10-28 16:25:28</span></td><td><span class="n">2020-10-28 16:25:28</span></td><td><span class="eb" style="top:3px"><span class="abs" style="left:5px;top:5px"><svg width="11" height="11" viewBox="0 0 11 11" style="display:block" ><path d="M0 11 L0.6 7.9 L6.7 1.8 L9.2 4.3 L3.1 10.4 Z" fill="#fff"/><path d="M7.7 1.2 L8.6 0.3 A1 1 0 0 1 10 0.3 L10.7 1 A1 1 0 0 1 10.7 2.4 L9.8 3.3 Z" fill="#fff"/></svg></span></span></td></tr><tr class="s"><td><span class="n">235</span></td><td>杨康萍</td><td>未选择</td><td><span class="n">125210417076559875</span></td><td><span class="n">95.00</span></td><td><span class="n">389</span></td><td><span class="n">-</span></td><td><span class="n">-</span></td><td><span class="n">-</span></td><td><span class="n">-</span></td><td><span class="g"><span class="dot"></span>正常</span></td><td><span class="d"><span class="dot"></span>默认</span></td><td><span class="d"><span class="dot"></span>返佣</span></td><td><span class="n">0</span></td><td><span class="n">2020-10-28 16:25:28</span></td><td><span class="n">2020-10-28 16:25:28</span></td><td><span class="eb" style="top:3px"><span class="abs" style="left:5px;top:5px"><svg width="11" height="11" viewBox="0 0 11 11" style="display:block" ><path d="M0 11 L0.6 7.9 L6.7 1.8 L9.2 4.3 L3.1 10.4 Z" fill="#fff"/><path d="M7.7 1.2 L8.6 0.3 A1 1 0 0 1 10 0.3 L10.7 1 A1 1 0 0 1 10.7 2.4 L9.8 3.3 Z" fill="#fff"/></svg></span></span></td></tr><tr class=""><td><span class="n">234</span></td><td>二号烧烤吧</td><td>美食饮品</td><td><span class="n">120757566782717953</span></td><td><span class="n">90.00</span></td><td><span class="n">5704</span></td><td>广东省</td><td>惠州市</td><td>惠东县</td><td></td><td><span class="g"><span class="dot"></span>正常</span></td><td><span class="g"><span class="dot"></span>推荐</span></td><td><span class="d"><span class="dot"></span>返佣</span></td><td><span class="n">0</span></td><td><span class="n">2020-10-19 13:44:35</span></td><td><span class="n">2020-10-19 13:44:54</span></td><td><span class="eb" style="top:3px"><span class="abs" style="left:5px;top:5px"><svg width="11" height="11" viewBox="0 0 11 11" style="display:block" ><path d="M0 11 L0.6 7.9 L6.7 1.8 L9.2 4.3 L3.1 10.4 Z" fill="#fff"/><path d="M7.7 1.2 L8.6 0.3 A1 1 0 0 1 10 0.3 L10.7 1 A1 1 0 0 1 10.7 2.4 L9.8 3.3 Z" fill="#fff"/></svg></span></span></td></tr><tr class="s"><td><span class="n">233</span></td><td>源品面包店</td><td>美食饮品</td><td><span class="n">110986052327849985</span></td><td><span class="n">90.00</span></td><td><span class="n">5015</span></td><td>广东省</td><td>惠州市</td><td>惠东县</td><td></td><td><span class="g"><span class="dot"></span>正常</span></td><td><span class="g"><span class="dot"></span>推荐</span></td><td><span class="d"><span class="dot"></span>返佣</span></td><td><span class="n">0</span></td><td><span class="n">2020-10-19 13:41:23</span></td><td><span class="n">2020-10-19 13:44:45</span></td><td><span class="eb" style="top:3px"><span class="abs" style="left:5px;top:5px"><svg width="11" height="11" viewBox="0 0 11 11" style="display:block" ><path d="M0 11 L0.6 7.9 L6.7 1.8 L9.2 4.3 L3.1 10.4 Z" fill="#fff"/><path d="M7.7 1.2 L8.6 0.3 A1 1 0 0 1 10 0.3 L10.7 1 A1 1 0 0 1 10.7 2.4 L9.8 3.3 Z" fill="#fff"/></svg></span></span></td></tr><tr class=""><td><span class="n">232</span></td><td>世纪阁理发店</td><td>美容美发</td><td><span class="n">110986009378177025</span></td><td><span class="n">85.00</span></td><td><span class="n">5231</span></td><td>广东省</td><td>惠州市</td><td>惠东县</td><td></td><td><span class="g"><span class="dot"></span>正常</span></td><td><span class="g"><span class="dot"></span>推荐</span></td><td><span class="d"><span class="dot"></span>返佣</span></td><td><span class="n">0</span></td><td><span class="n">2020-10-19 13:39:38</span></td><td><span class="n">2020-10-19 13:42:31</span></td><td><span class="eb" style="top:3px"><span class="abs" style="left:5px;top:5px"><svg width="11" height="11" viewBox="0 0 11 11" style="display:block" ><path d="M0 11 L0.6 7.9 L6.7 1.8 L9.2 4.3 L3.1 10.4 Z" fill="#fff"/><path d="M7.7 1.2 L8.6 0.3 A1 1 0 0 1 10 0.3 L10.7 1 A1 1 0 0 1 10.7 2.4 L9.8 3.3 Z" fill="#fff"/></svg></span></span></td></tr><tr class="s"><td><span class="n">231</span></td><td>小茶里奶茶店</td><td>美食饮品</td><td><span class="n">109841443543482369</span></td><td><span class="n">90.00</span></td><td><span class="n">3048</span></td><td>广东省</td><td>惠州市</td><td>惠东县</td><td></td><td><span class="g"><span class="dot"></span>正常</span></td><td><span class="g"><span class="dot"></span>推荐</span></td><td><span class="d"><span class="dot"></span>返佣</span></td><td><span class="n">0</span></td><td><span class="n">2020-10-19 13:38:23</span></td><td><span class="n">2020-10-19 13:38:37</span></td><td><span class="eb" style="top:3px"><span class="abs" style="left:5px;top:5px"><svg width="11" height="11" viewBox="0 0 11 11" style="display:block" ><path d="M0 11 L0.6 7.9 L6.7 1.8 L9.2 4.3 L3.1 10.4 Z" fill="#fff"/><path d="M7.7 1.2 L8.6 0.3 A1 1 0 0 1 10 0.3 L10.7 1 A1 1 0 0 1 10.7 2.4 L9.8 3.3 Z" fill="#fff"/></svg></span></span></td></tr><tr class="h"><td><span class="n">230</span></td><td>世纪陆壹捌美妆形象设计店</td><td>美容美发</td><td><span class="n">109841555212632065</span></td><td><span class="n">85.00</span></td><td><span class="n">5252</span></td><td>广东省</td><td>惠州市</td><td>惠东县</td><td></td><td><span class="g"><span class="dot"></span>正常</span></td><td><span class="g"><span class="dot"></span>推荐</span></td><td><span class="d"><span class="dot"></span>返佣</span></td><td><span class="n">0</span></td><td><span class="n">2020-10-19 13:36:03</span></td><td><span class="n">2021-01-08 16:56:43</span></td><td><span class="eb" style="top:3px"><span class="abs" style="left:5px;top:5px"><svg width="11" height="11" viewBox="0 0 11 11" style="display:block" ><path d="M0 11 L0.6 7.9 L6.7 1.8 L9.2 4.3 L3.1 10.4 Z" fill="#fff"/><path d="M7.7 1.2 L8.6 0.3 A1 1 0 0 1 10 0.3 L10.7 1 A1 1 0 0 1 10.7 2.4 L9.8 3.3 Z" fill="#fff"/></svg></span></span></td></tr></tbody></table>
<div class="abs" style="left:259px;top:602px;line-height:16px;color:#333;white-space:nowrap">显示第 1 到第 10 条记录，总共 233 条记录 每页显示</div>
<div class="abs gbtn" style="left:567px;top:596px;width:50px;height:31px;border-radius:3px"><div class="abs" style="left:12px;top:6px;line-height:16px;font-size:12px">10</div><div class="abs" style="left:29px;top:13px"><svg width="8" height="4" viewBox="0 0 8 4" style="display:block" ><path d="M0 4 H8 L4 0 Z" fill="#333"/></svg></div></div>
<div class="abs" style="left:621px;top:602px;line-height:16px;color:#333">条记录</div>
<div class="abs" style="left:1524px;top:594px;width:365px;height:32px;border:1px solid #ddd;border-radius:3px;background:#fafafa"></div>
<div class="abs pg" style="left:1524px;top:595px;width:64px;height:30px;background:transparent;color:#555">上一页</div>
<div class="abs pg" style="left:1588px;top:594px;width:33px;height:32px;background:#2c3e50;color:#fff">1</div>
<div class="abs pg" style="left:1622px;top:595px;width:30px;height:30px;background:transparent;color:#555">2</div>
<div class="abs" style="left:1652px;top:595px;width:1px;height:30px;background:#ddd"></div>
<div class="abs pg" style="left:1653px;top:595px;width:31px;height:30px;background:transparent;color:#555">3</div>
<div class="abs" style="left:1684px;top:595px;width:1px;height:30px;background:#ddd"></div>
<div class="abs pg" style="left:1685px;top:595px;width:32px;height:30px;background:transparent;color:#555">4</div>
<div class="abs" style="left:1717px;top:595px;width:1px;height:30px;background:#ddd"></div>
<div class="abs pg" style="left:1718px;top:595px;width:32px;height:30px;background:transparent;color:#555">5</div>
<div class="abs" style="left:1750px;top:595px;width:1px;height:30px;background:#ddd"></div>
<div class="abs pg" style="left:1751px;top:595px;width:34px;height:30px;background:#fff;color:#555">...</div>
<div class="abs" style="left:1785px;top:595px;width:1px;height:30px;background:#ddd"></div>
<div class="abs pg" style="left:1786px;top:595px;width:39px;height:30px;background:transparent;color:#555">24</div>
<div class="abs" style="left:1825px;top:595px;width:1px;height:30px;background:#ddd"></div>
<div class="abs pg" style="left:1826px;top:595px;width:62px;height:30px;background:transparent;color:#555">下一页</div>
</body></html>
